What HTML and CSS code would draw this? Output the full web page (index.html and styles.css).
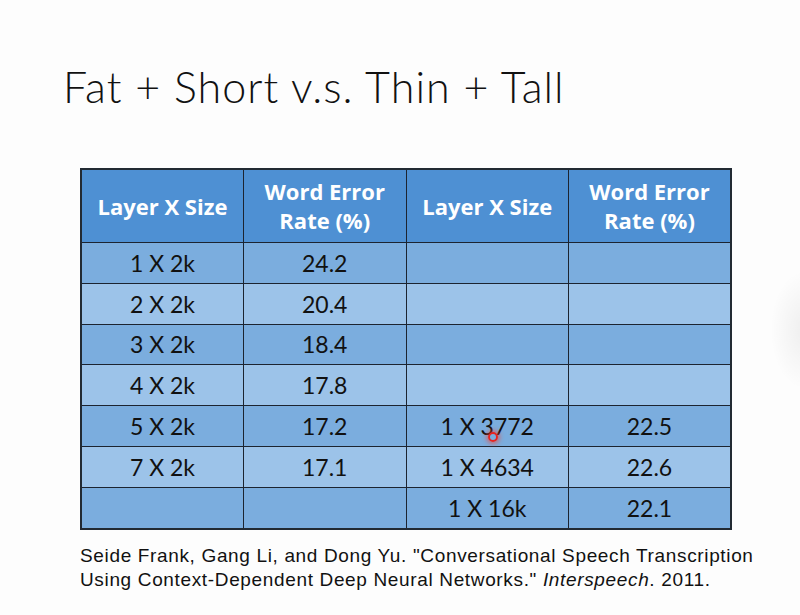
FILE: index.html
```html
<!DOCTYPE html>
<html>
<head>
<meta charset="utf-8">
<link rel="stylesheet" href="styles.css">
</head>
<body>
<div class="slide">
  <h1 class="title">Fat + Short v.s. Thin + Tall</h1>
  <table class="grid">
    <thead>
      <tr>
        <th>Layer X Size</th>
        <th>Word Error<br>Rate (%)</th>
        <th>Layer X Size</th>
        <th>Word Error<br>Rate (%)</th>
      </tr>
    </thead>
    <tbody>
      <tr class="odd"><td>1 X 2k</td><td>24.2</td><td></td><td></td></tr>
      <tr class="even"><td>2 X 2k</td><td>20.4</td><td></td><td></td></tr>
      <tr class="odd"><td>3 X 2k</td><td>18.4</td><td></td><td></td></tr>
      <tr class="even"><td>4 X 2k</td><td>17.8</td><td></td><td></td></tr>
      <tr class="odd"><td>5 X 2k</td><td>17.2</td><td>1 X 3772</td><td>22.5</td></tr>
      <tr class="even"><td>7 X 2k</td><td>17.1</td><td>1 X 4634</td><td>22.6</td></tr>
      <tr class="odd"><td></td><td></td><td>1 X 16k</td><td>22.1</td></tr>
    </tbody>
  </table>
  <p class="cite">Seide Frank, Gang Li, and Dong Yu. "Conversational Speech Transcription<br>Using Context-Dependent Deep Neural Networks." <em>Interspeech</em>. 2011.</p>
  <div class="shade"></div>
  <div class="cursor"></div>
</div>
</body>
</html>
```
FILE: styles.css
```css
html, body {
  margin: 0;
  padding: 0;
  background: #fdfdfd;
}
.slide {
  position: relative;
  width: 800px;
  height: 615px;
  overflow: hidden;
  background: #fdfdfd;
}
.title {
  margin: 0;
  padding: 65px 0 0 63px;
  height: 43px;
  font-family: Lato, "Open Sans", sans-serif;
  font-weight: 300;
  font-size: 43px;
  line-height: 43px;
  letter-spacing: 1.05px;
  color: #111;
}
.grid {
  margin: 60px 0 0 80px;
  width: 652px;
  border-collapse: collapse;
  table-layout: fixed;
  font-family: Lato, "Open Sans", sans-serif;
  border: 2px solid #222a33;
}
.grid th, .grid td {
  border: 1.5px solid #1c2430;
  text-align: center;
  padding: 0;
}
.grid th {
  height: 72px;
  background: #4e90d3;
  color: #fff;
  font-family: "Open Sans", Lato, sans-serif;
  font-weight: 700;
  font-size: 22px;
  line-height: 29px;
}
.grid td {
  height: 39.8px;
  font-size: 23px;
  color: #111;
}
.odd td { background: #7badde; }
.even td { background: #9cc3e9; }
.cite {
  margin: 14px 0 0 80px;
  font-family: "Liberation Sans", Arial, sans-serif;
  font-size: 19px;
  letter-spacing: 0.65px;
  line-height: 24px;
  color: #111;
}
.shade {
  position: absolute;
  right: -40px;
  top: 270px;
  width: 70px;
  height: 120px;
  border-radius: 50%;
  background: radial-gradient(ellipse at center, rgba(0,0,0,0.06), rgba(0,0,0,0) 70%);
}
.cursor {
  position: absolute;
  left: 488px;
  top: 432px;
  width: 6px;
  height: 6px;
  border: 2px solid #e8231f;
  border-radius: 50%;
  box-shadow: 0 0 4px 2px rgba(255,60,40,0.55);
}
```
